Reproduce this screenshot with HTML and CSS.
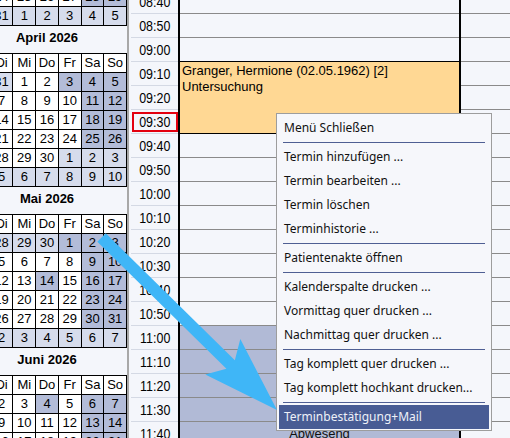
FILE: index.html
```html
<!DOCTYPE html>
<html lang="de">
<head>
<meta charset="utf-8">
<title>Terminkalender</title>
<link rel="stylesheet" href="styles.css">
</head>
<body>
<div class="app">
  <aside class="minical">
    <div class="minical-inner">
      <section class="month">
        <div class="month-grid">
          <div class="c">23</div><div class="c">24</div><div class="c">25</div><div class="c">26</div><div class="c">27</div><div class="c w">28</div><div class="c w">29</div>
          <div class="c o">30</div><div class="c o">31</div><div class="c o">1</div><div class="c o">2</div><div class="c o">3</div><div class="c o">4</div><div class="c o">5</div>
        </div>
      </section>
      <section class="month">
        <div class="month-title">April 2026</div>
        <div class="month-grid">
          <div class="c">Mo</div><div class="c">Di</div><div class="c">Mi</div><div class="c">Do</div><div class="c">Fr</div><div class="c">Sa</div><div class="c">So</div>
          <div class="c o">30</div><div class="c o">31</div><div class="c">1</div><div class="c">2</div><div class="c w">3</div><div class="c w">4</div><div class="c w">5</div>
          <div class="c w">6</div><div class="c">7</div><div class="c">8</div><div class="c">9</div><div class="c">10</div><div class="c w">11</div><div class="c w">12</div>
          <div class="c">13</div><div class="c">14</div><div class="c">15</div><div class="c">16</div><div class="c">17</div><div class="c w">18</div><div class="c w">19</div>
          <div class="c">20</div><div class="c">21</div><div class="c">22</div><div class="c">23</div><div class="c">24</div><div class="c w">25</div><div class="c w">26</div>
          <div class="c">27</div><div class="c">28</div><div class="c">29</div><div class="c">30</div><div class="c o">1</div><div class="c o">2</div><div class="c o">3</div>
          <div class="c o">4</div><div class="c o">5</div><div class="c o">6</div><div class="c o">7</div><div class="c o">8</div><div class="c o">9</div><div class="c o">10</div>
        </div>
      </section>
      <section class="month">
        <div class="month-title">Mai 2026</div>
        <div class="month-grid">
          <div class="c">Mo</div><div class="c">Di</div><div class="c">Mi</div><div class="c">Do</div><div class="c">Fr</div><div class="c">Sa</div><div class="c">So</div>
          <div class="c o">27</div><div class="c o">28</div><div class="c o">29</div><div class="c o">30</div><div class="c w">1</div><div class="c w">2</div><div class="c w">3</div>
          <div class="c">4</div><div class="c">5</div><div class="c">6</div><div class="c">7</div><div class="c">8</div><div class="c w">9</div><div class="c w">10</div>
          <div class="c">11</div><div class="c">12</div><div class="c">13</div><div class="c w">14</div><div class="c">15</div><div class="c w">16</div><div class="c w">17</div>
          <div class="c">18</div><div class="c">19</div><div class="c">20</div><div class="c">21</div><div class="c">22</div><div class="c w">23</div><div class="c w">24</div>
          <div class="c w">25</div><div class="c">26</div><div class="c">27</div><div class="c">28</div><div class="c">29</div><div class="c w">30</div><div class="c w">31</div>
          <div class="c o">1</div><div class="c o">2</div><div class="c o">3</div><div class="c o">4</div><div class="c o">5</div><div class="c o">6</div><div class="c o">7</div>
        </div>
      </section>
      <section class="month">
        <div class="month-title">Juni 2026</div>
        <div class="month-grid">
          <div class="c">Mo</div><div class="c">Di</div><div class="c">Mi</div><div class="c">Do</div><div class="c">Fr</div><div class="c">Sa</div><div class="c">So</div>
          <div class="c">1</div><div class="c">2</div><div class="c">3</div><div class="c w">4</div><div class="c">5</div><div class="c w">6</div><div class="c w">7</div>
          <div class="c">8</div><div class="c">9</div><div class="c">10</div><div class="c">11</div><div class="c">12</div><div class="c w">13</div><div class="c w">14</div>
          <div class="c">15</div><div class="c">16</div><div class="c">17</div><div class="c">18</div><div class="c">19</div><div class="c w">20</div><div class="c w">21</div>
        </div>
      </section>
    </div>
  </aside>

  <div class="splitter"></div>

  <div class="timecol">
    <div class="tslots">
      <div class="tslot"><div class="tlabel"><span>08:40</span></div></div>
      <div class="tslot"><div class="tlabel"><span>08:50</span></div></div>
      <div class="tslot"><div class="tlabel"><span>09:00</span></div></div>
      <div class="tslot"><div class="tlabel"><span>09:10</span></div></div>
      <div class="tslot"><div class="tlabel"><span>09:20</span></div></div>
      <div class="tslot now"><div class="tlabel"><span>09:30</span></div></div>
      <div class="tslot"><div class="tlabel"><span>09:40</span></div></div>
      <div class="tslot"><div class="tlabel"><span>09:50</span></div></div>
      <div class="tslot"><div class="tlabel"><span>10:00</span></div></div>
      <div class="tslot"><div class="tlabel"><span>10:10</span></div></div>
      <div class="tslot"><div class="tlabel"><span>10:20</span></div></div>
      <div class="tslot"><div class="tlabel"><span>10:30</span></div></div>
      <div class="tslot"><div class="tlabel"><span>10:40</span></div></div>
      <div class="tslot"><div class="tlabel"><span>10:50</span></div></div>
      <div class="tslot"><div class="tlabel"><span>11:00</span></div></div>
      <div class="tslot"><div class="tlabel"><span>11:10</span></div></div>
      <div class="tslot"><div class="tlabel"><span>11:20</span></div></div>
      <div class="tslot"><div class="tlabel"><span>11:30</span></div></div>
      <div class="tslot"><div class="tlabel"><span>11:40</span></div></div>
    </div>
  </div>

  <div class="daycol">
    <div class="day-grid">
      <div class="dslots">
        <div class="dslot"></div><div class="dslot"></div><div class="dslot"></div><div class="dslot"></div>
        <div class="dslot"></div><div class="dslot"></div><div class="dslot"></div><div class="dslot"></div>
        <div class="dslot"></div><div class="dslot"></div><div class="dslot"></div><div class="dslot"></div>
        <div class="dslot"></div><div class="dslot"></div>
        <div class="dslot abs"></div><div class="dslot abs"></div><div class="dslot abs"></div><div class="dslot abs"></div>
        <div class="dslot abs abs-label">Abwesend</div>
      </div>
      <div class="appt">
        <div>Granger, Hermione (02.05.1962) [2]</div>
        <div>Untersuchung</div>
      </div>
    </div>
  </div>

  <div class="nextcol">
    <div class="nslots">
      <div class="nslot"></div><div class="nslot"></div><div class="nslot"></div><div class="nslot"></div>
      <div class="nslot"></div><div class="nslot"></div><div class="nslot"></div><div class="nslot"></div>
      <div class="nslot"></div><div class="nslot"></div><div class="nslot"></div><div class="nslot"></div>
      <div class="nslot"></div><div class="nslot"></div><div class="nslot"></div><div class="nslot"></div>
      <div class="nslot"></div><div class="nslot"></div><div class="nslot"></div>
    </div>
  </div>
</div>

<div class="ctx">
  <div class="mi">Menü Schließen</div>
  <div class="sep"></div>
  <div class="mi">Termin hinzufügen ...</div>
  <div class="mi">Termin bearbeiten ...</div>
  <div class="mi">Termin löschen</div>
  <div class="mi">Terminhistorie ...</div>
  <div class="sep"></div>
  <div class="mi">Patientenakte öffnen</div>
  <div class="sep"></div>
  <div class="mi">Kalenderspalte drucken ...</div>
  <div class="mi">Vormittag quer drucken ...</div>
  <div class="mi">Nachmittag quer drucken ...</div>
  <div class="sep"></div>
  <div class="mi">Tag komplett quer drucken ...</div>
  <div class="mi">Tag komplett hochkant drucken...</div>
  <div class="sep"></div>
  <div class="mi active">Terminbestätigung+Mail</div>
</div>

<svg class="arrow" width="510" height="438" viewBox="0 0 510 438" aria-hidden="true">
  <g transform="translate(277 410) rotate(44.5)">
    <polygon points="0,0 -76,-25 -65,-6 -246,-6 -246,6 -65,6 -76,25" fill="#3fb6f7"/>
  </g>
</svg>
</body>
</html>
```
FILE: styles.css
```css
* {
  box-sizing: border-box;
}

html,
body {
  margin: 0;
  padding: 0;
}

body {
  position: relative;
  width: 510px;
  height: 438px;
  overflow: hidden;
  background: #f4f6fb;
  font-family: "Liberation Sans", Arial, sans-serif;
  font-size: 13px;
  color: #000;
}

.app {
  display: flex;
  height: 438px;
  overflow: hidden;
}

/* ---------- mini calendar ---------- */
.minical {
  flex: 0 0 127px;
  overflow: hidden;
  background: #f4f6fb;
}

.minical-inner {
  width: 160px;
  margin-left: -33px;
  margin-top: -13px;
}

.month-title {
  height: 27px;
  line-height: 24px;
  text-align: center;
  font-weight: bold;
}

.month-grid {
  display: grid;
  grid-template-columns: repeat(7, 1fr);
  grid-auto-rows: 18px;
  gap: 1px;
  background: #000;
  border: 1px solid #000;
}

.c {
  background: #fff;
  text-align: center;
  line-height: 18px;
}

.c.w {
  background: #b3bcd8;
}

.c.o {
  background: #d6dcec;
}

/* ---------- splitter ---------- */
.splitter {
  flex: 0 0 4px;
  border-left: 2px solid #a8a8a8;
  background: #f4f6fb;
}

/* ---------- time column ---------- */
.timecol {
  flex: 0 0 49px;
  border-right: 2px solid #000;
  background: #f4f6fb;
}

.tslots {
  display: flex;
  flex-direction: column;
  margin-top: -10px;
}

.tslot {
  height: 24px;
  flex: 0 0 24px;
  border-bottom: 1px solid #d4d9e4;
  padding: 2px 0 1px 1px;
  display: flex;
}

.tlabel {
  flex: 1;
  border: 2px solid transparent;
  display: flex;
  align-items: center;
  justify-content: center;
}

.tlabel span {
  display: inline-block;
  font-size: 15px;
  line-height: 16px;
  transform: scaleX(0.83);
}

.tslot.now .tlabel {
  border-color: #e3000f;
}

/* ---------- day column ---------- */
.daycol {
  flex: 0 0 281px;
  border-right: 2px solid #000;
  background: #f4f6fb;
}

.day-grid {
  display: grid;
  grid-template-columns: 100%;
  grid-template-rows: repeat(19, 24px);
  margin-top: -10px;
}

.dslots {
  grid-area: 1 / 1 / -1 / 2;
  display: flex;
  flex-direction: column;
}

.dslot {
  flex: 0 0 24px;
  height: 24px;
  border-bottom: 1px solid #8a8a8a;
}

.dslot.abs {
  background: #b1bad6;
}

.abs-label {
  text-align: center;
  padding-top: 4px;
  line-height: 16px;
  color: #111;
}

.appt {
  grid-area: 4 / 1 / 7 / 2;
  margin-top: -1px;
  background: #ffd894;
  border-top: 1px solid #000;
  border-bottom: 1px solid #000;
  padding: 1px 2px;
  line-height: 16px;
  white-space: nowrap;
}

/* ---------- next column ---------- */
.nextcol {
  flex: 1 1 auto;
  background: #f4f6fb;
}

.nslots {
  display: flex;
  flex-direction: column;
  margin-top: -10px;
}

.nslot {
  flex: 0 0 24px;
  height: 24px;
  border-bottom: 1px solid #8a8a8a;
}

/* ---------- context menu ---------- */
.ctx {
  position: absolute;
  left: 276px;
  top: 113px;
  width: 216px;
  z-index: 5;
  background: #f6f7fb;
  border: 1px solid #9d9d9d;
  padding: 2px 2px 1px 2px;
  font-family: "Noto Sans", "Open Sans", sans-serif;
  font-size: 12px;
  color: #111;
}

.mi {
  height: 24px;
  line-height: 24px;
  padding-left: 5px;
  white-space: nowrap;
}

.mi.active {
  background: #485c94;
  color: #eef1f8;
}

.sep {
  height: 1px;
  margin: 2px 4px;
  background: #4f5f93;
}

/* ---------- annotation arrow ---------- */
.arrow {
  position: absolute;
  left: 0;
  top: 0;
  z-index: 10;
  pointer-events: none;
}
```
